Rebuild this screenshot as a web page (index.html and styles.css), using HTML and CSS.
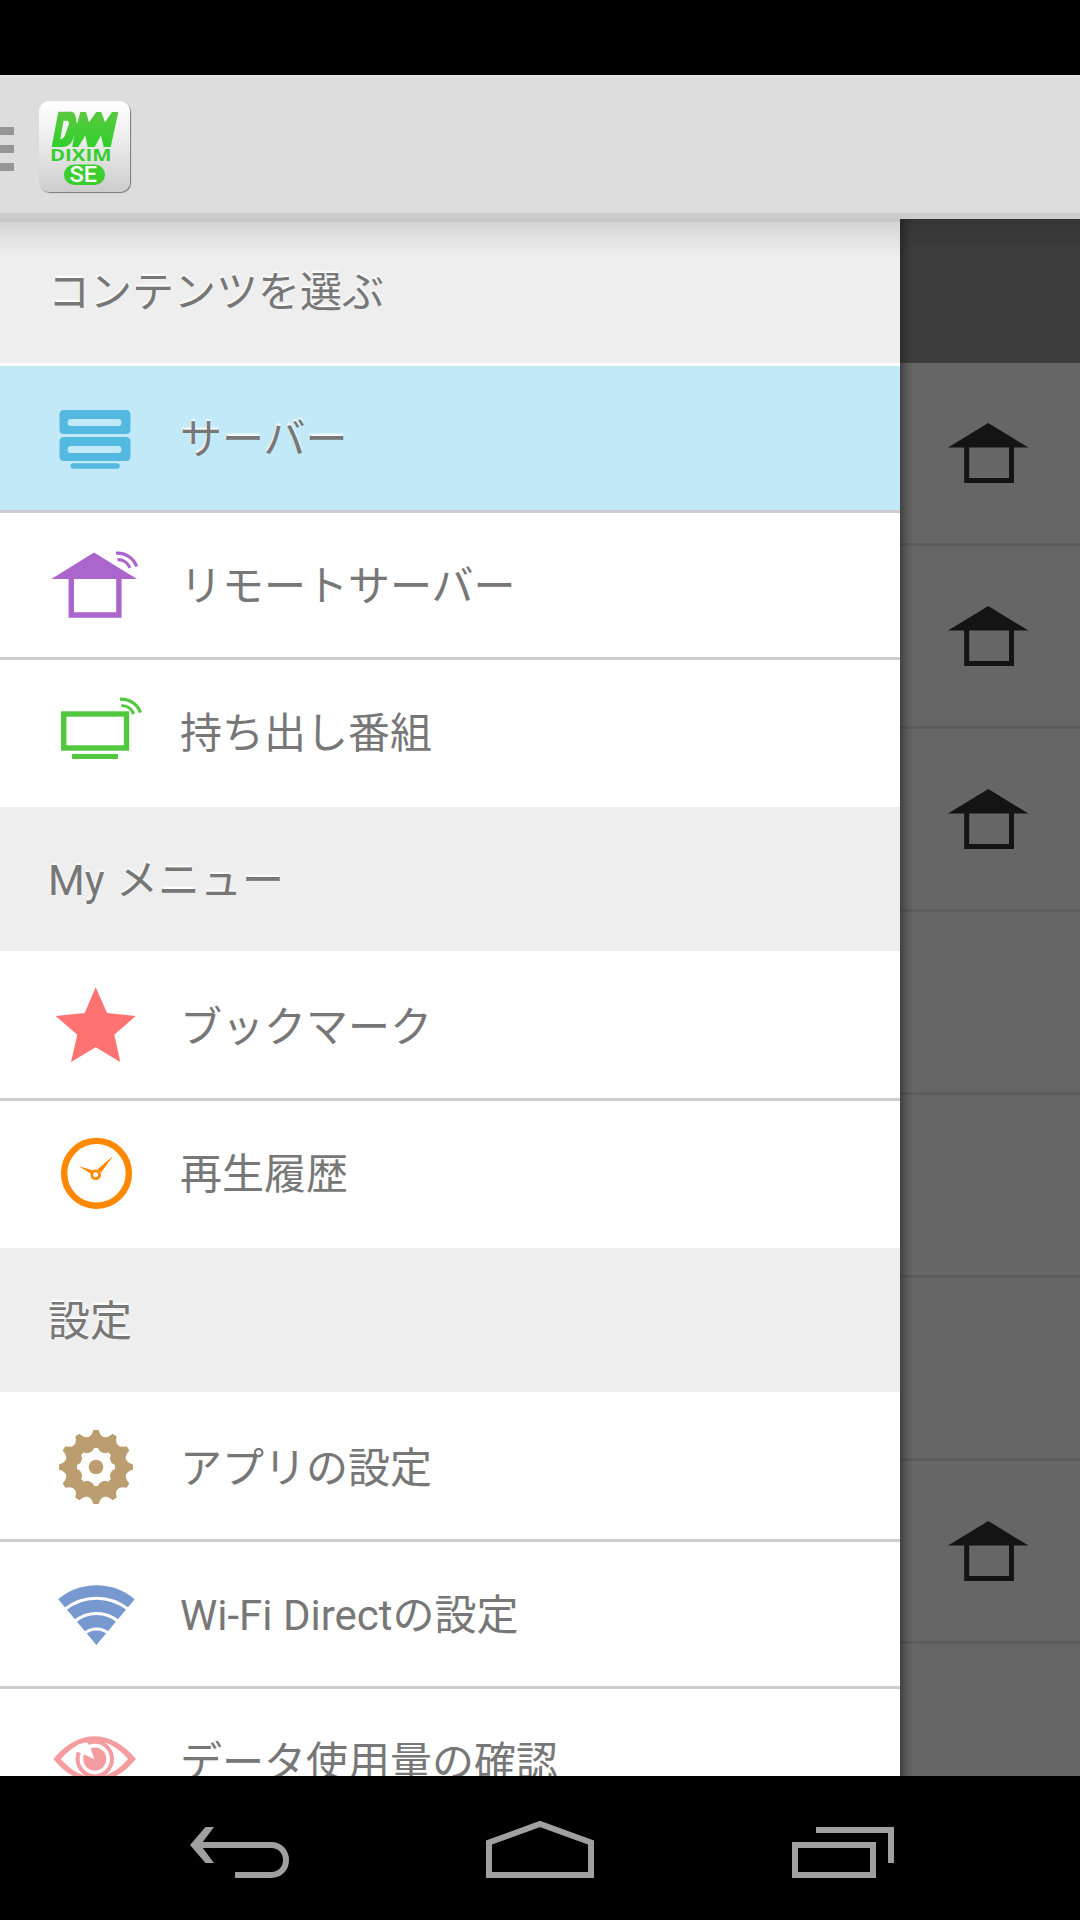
FILE: index.html
```html
<!DOCTYPE html>
<html lang="ja">
<head>
<meta charset="utf-8">
<title>DiXiM SE</title>
<link rel="stylesheet" href="styles.css">
</head>
<body>
<svg class="defs" width="0" height="0" aria-hidden="true">
  <symbol id="house" viewBox="0 0 82 62">
    <path d="M1 25.600 41.300 1l40.200 24.600z"/>
    <path d="M19.700 25v33.600h44.800V25" fill="none" stroke="currentColor" stroke-width="5"/>
  </symbol>
</svg>
<div class="screen">
  <div class="status"></div>
  <header class="bar">
    <div class="burger"><i></i><i></i><i></i></div>
    <div class="logo">
      <svg width="91" height="91" viewBox="0 0 91 91">
        <defs><linearGradient id="g" x1="0" y1="0" x2="0" y2="1"><stop offset="0" stop-color="#5cc83f"/><stop offset="1" stop-color="#30d02c"/></linearGradient></defs>
        <path fill="url(#g)" fill-rule="evenodd" d="M19.300 10.800H33q4 1 4.500 11h1l2.800-10.800H47l3 10.300L57.300 11h5L66 21.300 73 11h6.300l-7.600 35h-7L62 34.500 55.700 46h-7l-2.400-11.500L39.300 46h-6l2-11.500Q32.500 45 25 46H12.700zM24.500 19.700 21.300 38q4 0 5.500-6l3-8.500q.5-3.800-1.500-3.800z"/>
        <text class="logo-name" x="11" y="60.300" textLength="61.500" lengthAdjust="spacingAndGlyphs">DIXIM</text>
        <rect x="25" y="63.500" width="41" height="20.500" rx="10.200" fill="#3bce2d"/>
        <text class="logo-se" x="30.500" y="81.300" textLength="27.500" lengthAdjust="spacingAndGlyphs">SE</text>
      </svg>
    </div>
  </header>
  <main class="content">
    <nav class="drawer">
      <h2>コンテンツを選ぶ</h2>
      <a class="item selected"><svg class="icon" viewBox="0 0 96 144" fill="#53b9e0"><path fill-rule="evenodd" d="M16 44h62q4.500 0 4.500 4.500v15q0 4.500-4.500 4.500H16q-4.500 0-4.500-4.500v-15Q11.500 44 16 44zM23 53a3.500 3.500 0 0 0 0 7h47a3.500 3.500 0 0 0 0-7zM16 71h62q4.500 0 4.500 4.500v15q0 4.500-4.500 4.500H16q-4.500 0-4.500-4.500v-15Q11.500 71 16 71zM23 80a3.500 3.500 0 0 0 0 7h47a3.500 3.500 0 0 0 0-7z"/><rect x="22.600" y="97.300" width="49.200" height="5.400" rx="2.700"/></svg><span>サーバー</span></a>
      <a class="item"><svg class="icon" viewBox="0 0 96 144" fill="#aa66cc"><path d="M3.300 66 46 39.500 89 66z"/><g fill="none" stroke="#aa66cc"><path d="M23.300 65v37h47.600V65" stroke-width="5.400"/><path d="M68 40.200A20 20 0 0 1 88.600 53.500M69.500 46.700A13 13 0 0 1 82 54.800" stroke-width="3.200"/></g></svg><span>リモートサーバー</span></a>
      <a class="item"><svg class="icon" viewBox="0 0 96 144" fill="none" stroke="#51c83e"><rect x="15.700" y="54" width="62.800" height="34" stroke-width="5.400"/><path d="M24 96.500h46" stroke-width="5"/><path d="M72 39.200A20 20 0 0 1 92.400 52.500M73.300 45.500A13 13 0 0 1 85.600 53.900" stroke-width="3.200"/></svg><span>持ち出し番組</span></a>
      <h2>My メニュー</h2>
      <a class="item"><svg class="icon" viewBox="0 0 96 144" fill="#ff7272"><path d="M47.700 33.300 59 59l28.700 3-21.400 18.700 6 27.300-24.600-14.700L23 108l6.300-27.300L7.700 62l29-3z"/></svg><span>ブックマーク</span></a>
      <a class="item"><svg class="icon" viewBox="0 0 96 144" fill="#ff8800"><circle cx="48.500" cy="72.300" r="32.400" fill="none" stroke="#ff8800" stroke-width="6.400"/><path d="M30.700 65.300l14.800 4.200-2.500 3.200zM65 55 53.200 71.500l-4-3z"/><circle cx="47.700" cy="73.700" r="3.900" fill="#fff" stroke="#ff8800" stroke-width="2.800"/></svg><span>再生履歴</span></a>
      <h2>設定</h2>
      <a class="item"><svg class="icon" viewBox="0 0 96 144" fill="#bb9d6f">
        <g transform="translate(48 72)"><g id="t4"><g id="t1"><path id="t" d="M-8-29.500q4-2 5.500-7.500h5q1.500 5.500 5.500 7.500z"/><use href="#t" transform="rotate(180)"/></g><use href="#t1" transform="rotate(90)"/></g><use href="#t4" transform="rotate(30)"/><use href="#t4" transform="rotate(60)"/><circle r="31"/>
        <g fill="#fff"><circle r="15.800"/><g id="n2"><path id="n" d="M-6.500-14q3.500-1.500 4.500-5h4q1 3.500 4.500 5z"/><use href="#n" transform="rotate(90)"/><use href="#n" transform="rotate(180)"/><use href="#n" transform="rotate(270)"/></g><use href="#n2" transform="rotate(45)"/></g><circle r="7.300"/></g></svg><span>アプリの設定</span></a>
      <a class="item"><svg class="icon" viewBox="0 0 96 144"><path fill="#7799cf" d="M48.400 103 10.200 57.300a59 59 0 0 1 76.500 0z"/><path fill="none" stroke="#fff" stroke-width="3" d="M16.500 67.500a51 51 0 0 1 64 0M26.500 79.500a34 34 0 0 1 44 0M36.500 91.500a18 18 0 0 1 24 0"/></svg><span>Wi-Fi Directの設定</span></a>
      <a class="item"><svg class="icon" viewBox="0 0 96 144" fill="#f49ca0"><path fill-rule="evenodd" d="M5.300 70C30 39.500 63 39.500 88 70 63 100.500 30 100.500 5.300 70zM13 70C33 94 60 94 80 70 60 46 33 46 13 70z"/><circle cx="46.800" cy="70" r="17.200" fill="#fff" stroke="#f49ca0" stroke-width="4"/><circle cx="46.800" cy="70" r="11.500"/><path fill="#fff" d="M46.300 70.300 35.300 65l-8.500-3L29 56l10-2.500 3 3.500z"/></svg><span>データ使用量の確認</span></a>
    </nav>
    <section class="servers">
      <div class="servers-head"></div>
      <div class="server"><svg><use href="#house"/></svg></div>
      <div class="server"><svg><use href="#house"/></svg></div>
      <div class="server"><svg><use href="#house"/></svg></div>
      <div class="server"></div>
      <div class="server"></div>
      <div class="server"></div>
      <div class="server"><svg><use href="#house"/></svg></div>
      <div class="server"></div>
    </section>
  </main>
  <footer class="nav">
    <svg width="1080" height="144" viewBox="0 0 1080 144" fill="none" stroke="#a0a0a0" stroke-width="6">
      <path d="M196 69h75c20 0 20 30 0 30h-36"/><path fill="#a0a0a0" stroke="none" d="M190 69l15.500-18h8.500l-13.500 18L214 87h-8.500z"/>
      <path d="M489 99V66.500L540 48l51 18.500V99z"/>
      <path d="M795 69h78v30h-78zM816 54h75v33"/>
    </svg>
  </footer>
</div>
</body>
</html>
```
FILE: styles.css
```css
* { box-sizing: border-box; }
body { margin: 0; background: #000; }
.defs { display: block; }
.screen {
  width: 1080px;
  height: 1920px;
  display: flex;
  flex-direction: column;
  overflow: hidden;
  font-family: Roboto, "Noto Sans CJK JP", sans-serif;
}
.status { height: 75px; flex: none; background: #000; }
.bar {
  height: 144px;
  flex: none;
  display: flex;
  align-items: flex-start;
  background: #ddd;
  border-top: 2px solid #e4e2e4;
  border-bottom: 6px solid #ccc;
}
.burger { width: 14px; margin-top: 50px; display: grid; gap: 10px; }
.burger i { height: 8px; background: #969696; }
.logo {
  width: 91px;
  height: 91px;
  margin: 24px 0 0 25px;
  border-radius: 10px;
  background: linear-gradient(#fff, #eee 40%, #cdcdcd);
  box-shadow: 1px 1px 1px #777;
}
.logo svg { display: block; }
.logo-name { font: 700 15.5px "Open Sans", sans-serif; fill: #36ce2c; }
.logo-se { font: 500 22px Roboto, sans-serif; fill: #fff; }

.content { height: 1557px; flex: none; display: flex; overflow: hidden; }
.drawer { width: 900px; flex: none; background: #fff; }
.drawer h2 {
  height: 144px;
  margin: 0;
  padding-left: 48px;
  background: #eee;
  color: #777;
  font-size: 42px;
  font-weight: 400;
  line-height: 148px;
  word-spacing: 1px;
  text-shadow: 0 -2px 2px #fff;
}
.drawer h2:first-child {
  background: linear-gradient(#c8c8c8 3px, #d4d4d4 3px, #e2e2e2 20px, #eee 38px);
}
.item {
  height: 147px;
  display: flex;
  gap: 36px;
  padding-left: 48px;
  border-top: 3px solid #ccc;
  color: #777;
  font-size: 42px;
  line-height: 148px;
  white-space: nowrap;
}
h2 + .item { border-top-color: #fff; }
.item:has(+ h2) { height: 150px; }
.selected {
  background: #c2e9f8;
  background-clip: padding-box;
  text-shadow: 0 -2px 2px #fff;
}
.icon { width: 96px; height: 144px; flex: none; }

.servers {
  flex: 1;
  background: linear-gradient(90deg, rgba(0,0,0,.36), rgba(0,0,0,.12) 7px, transparent 13px), #666;
}
.servers-head {
  height: 144px;
  background: linear-gradient(90deg, rgba(0,0,0,.3), rgba(0,0,0,.1) 7px, transparent 13px), linear-gradient(#353535, #3d3d3d 38px);
}
.server {
  height: 183px;
  padding: 59px 0 0 47px;
  border-bottom: 3px solid rgba(0,0,0,.09);
}
.server svg { display: block; width: 82px; height: 62px; color: #141414; fill: #141414; }
.nav { height: 144px; background: #000; }
.nav svg { display: block; }
```
